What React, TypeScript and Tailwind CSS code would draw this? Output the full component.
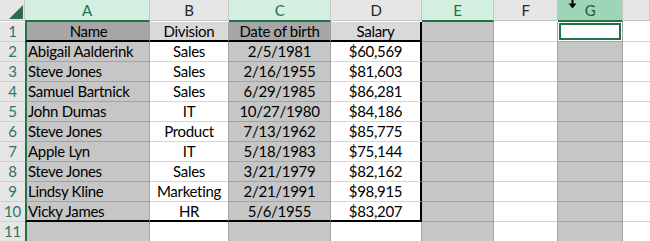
import React from 'react';

type Row = { name: string; division: string; dob: string; salary: string };

const rows: Row[] = [
  { name: 'Abigail Aalderink', division: 'Sales', dob: '2/5/1981', salary: '$60,569' },
  { name: 'Steve Jones', division: 'Sales', dob: '2/16/1955', salary: '$81,603' },
  { name: 'Samuel Bartnick', division: 'Sales', dob: '6/29/1985', salary: '$86,281' },
  { name: 'John Dumas', division: 'IT', dob: '10/27/1980', salary: '$84,186' },
  { name: 'Steve Jones', division: 'Product', dob: '7/13/1962', salary: '$85,775' },
  { name: 'Apple Lyn', division: 'IT', dob: '5/18/1983', salary: '$75,144' },
  { name: 'Steve Jones', division: 'Sales', dob: '3/21/1979', salary: '$82,162' },
  { name: 'Lindsy Kline', division: 'Marketing', dob: '2/21/1991', salary: '$98,915' },
  { name: 'Vicky James', division: 'HR', dob: '5/6/1955', salary: '$83,207' },
];

// H is cut off by the window edge, so its letter is not visible
const columns = ['A', 'B', 'C', 'D', 'E', 'F', 'G', ''];
const selected = ['A', 'C', 'E', 'G'];

const HeaderCell = ({ label }: { label: string }) => {
  if (label === 'G') {
    return (
      <div className="relative flex items-center justify-center bg-[#9fd5b7] border-r border-[#c6c6c6] border-b-2 border-b-[#217346] text-[#1d5a3a]">
        G
        <svg className="absolute left-[10px] top-0" width="9" height="9" viewBox="0 0 9 9">
          <rect x="3.5" y="0" width="2" height="4" fill="#000" />
          <polygon points="0.5,3.5 8.5,3.5 4.5,8.5" fill="#000" />
        </svg>
      </div>
    );
  }
  if (selected.includes(label)) {
    return (
      <div className="flex items-center justify-center bg-[#d3f0e0] border-r border-[#c6c6c6] border-b-2 border-b-[#217346] text-[#217346]">
        {label}
      </div>
    );
  }
  return (
    <div className="flex items-center justify-center bg-[#e6e6e6] border-r border-[#c6c6c6] border-b border-b-[#c6c6c6] mb-[1px] text-[#262626]">
      {label}
    </div>
  );
};

const RowHeader = ({ n }: { n: number }) => (
  <div className="flex items-center justify-center bg-[#e6e6e6] border-b border-[#cfcfcf] text-[#2f7561]">
    {n}
  </div>
);

export default function App() {
  const cellBase = 'flex items-center border-b';

  const body = [];
  for (let r = 1; r <= 11; r++) {
    const data = r >= 2 && r <= 10 ? rows[r - 2] : null;
    const isHead = r === 1;
    const thick = r === 1 || r === 10;
    body.push(<RowHeader key={`h${r}`} n={r} />);

    // A
    body.push(
      <div
        key={`a${r}`}
        className={`${cellBase} pl-[1px] border-l-2 border-l-[#217346] border-r border-r-[#a3a3a3] ${
          isHead ? 'justify-center bg-[#a6a6a6]' : 'bg-[#c6c6c6]'
        } ${thick ? 'border-b-2 border-b-black' : 'border-b-[#a3a3a3]'}`}
      >
        {isHead ? 'Name' : data?.name}
      </div>
    );
    // B
    body.push(
      <div
        key={`b${r}`}
        className={`${cellBase} justify-center border-r border-r-[#a3a3a3] ${
          isHead ? 'bg-[#d9d9d9]' : 'bg-white'
        } ${thick ? 'border-b-2 border-b-black' : 'border-b-[#d4d4d4]'}`}
      >
        {isHead ? 'Division' : data?.division}
      </div>
    );
    // C
    body.push(
      <div
        key={`c${r}`}
        className={`${cellBase} justify-center border-r border-r-[#a3a3a3] ${
          isHead ? 'bg-[#a6a6a6]' : 'bg-[#c6c6c6]'
        } ${thick ? 'border-b-2 border-b-black' : 'border-b-[#a3a3a3]'}`}
      >
        {isHead ? 'Date of birth' : data?.dob}
      </div>
    );
    // D
    body.push(
      <div
        key={`d${r}`}
        className={`${cellBase} justify-center ${r <= 10 ? 'border-r-2 border-r-black' : 'border-r border-r-[#a3a3a3]'} ${
          isHead ? 'bg-[#d9d9d9]' : 'bg-white'
        } ${thick ? 'border-b-2 border-b-black' : 'border-b-[#d4d4d4]'}`}
      >
        {isHead ? 'Salary' : data?.salary}
      </div>
    );
    // E
    body.push(
      <div key={`e${r}`} className={`${cellBase} bg-[#c6c6c6] border-r border-r-[#a3a3a3] border-b-[#a3a3a3]`} />
    );
    // F
    body.push(
      <div key={`f${r}`} className={`${cellBase} bg-white border-r border-r-[#a3a3a3] border-b-[#d4d4d4]`} />
    );
    // G
    body.push(
      isHead ? (
        <div key={`g${r}`} className="flex bg-white border-r border-r-[#a3a3a3] border-b border-b-[#a3a3a3] p-[1px]">
          <div className="flex-1 border-2 border-[#217346]" />
        </div>
      ) : (
        <div key={`g${r}`} className={`${cellBase} bg-[#c6c6c6] border-r border-r-[#a3a3a3] border-b-[#a3a3a3]`} />
      )
    );
    // H
    body.push(<div key={`x${r}`} className={`${cellBase} bg-white border-b-[#d4d4d4]`} />);
  }

  return (
    <div
      className="w-[650px] h-[241px] overflow-hidden bg-white text-[15px] leading-none text-black tracking-[-0.3px]"
      style={{ fontFamily: 'Lato, "Liberation Sans", sans-serif' }}
    >
      <div className="grid grid-cols-[25px_125px_79px_102px_91px_72px_64px_65px_1fr] grid-rows-[22px_repeat(11,20px)]">
        <div className="relative bg-[#e6e6e6] border-r border-[#c6c6c6] border-b border-b-[#c6c6c6] mb-[1px]">
          <svg className="absolute right-[1px] bottom-[1px]" width="14" height="14" viewBox="0 0 14 14">
            <polygon points="14,0 14,14 0,14" fill="#2d6a4f" />
          </svg>
        </div>
        {columns.map((c, i) => (
          <HeaderCell key={i} label={c} />
        ))}
        {body}
      </div>
    </div>
  );
}
